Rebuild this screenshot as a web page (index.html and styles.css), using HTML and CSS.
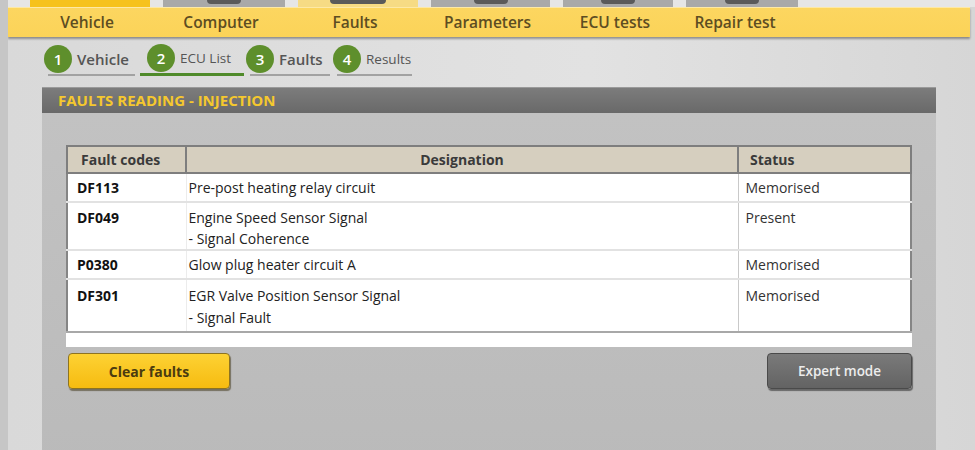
FILE: index.html
```html
<!DOCTYPE html>
<html lang="en">
<head>
    <meta charset="UTF-8">
    <title>Faults reading - Injection</title>
    <link rel="stylesheet" href="styles.css">
</head>
<body>
    <div class="screen">
        <div class="tab-tops">
            <div class="tab-top tab-active w1"></div>
            <div class="tab-top w2"><span class="tab-icon"></span></div>
            <div class="tab-top tab-current w3"><span class="tab-icon wide"></span></div>
            <div class="tab-top w4"><span class="tab-icon"></span></div>
            <div class="tab-top w5"><span class="tab-icon"></span></div>
            <div class="tab-top w6"><span class="tab-icon"></span></div>
        </div>
        <div class="menu">
            <div class="menu-item w1">Vehicle</div>
            <div class="menu-item w2">Computer</div>
            <div class="menu-item w3">Faults</div>
            <div class="menu-item w4">Parameters</div>
            <div class="menu-item w5">ECU tests</div>
            <div class="menu-item w6">Repair test</div>
        </div>

        <div class="steps">
            <div class="step step-1 done"><span class="num">1</span>Vehicle</div>
            <div class="step step-2 active"><span class="num">2</span>ECU List</div>
            <div class="step step-3 done"><span class="num">3</span>Faults</div>
            <div class="step step-4"><span class="num">4</span>Results</div>
        </div>

        <div class="panel">
            <div class="panel-title">FAULTS READING - INJECTION</div>
            <div class="panel-body">
                <div class="table-wrap">
                    <table class="faults">
                        <thead>
                            <tr>
                                <th class="col-code">Fault codes</th>
                                <th class="col-desc">Designation</th>
                                <th class="col-status">Status</th>
                            </tr>
                        </thead>
                        <tbody>
                            <tr>
                                <td class="code">DF113</td>
                                <td class="desc">Pre-post heating relay circuit</td>
                                <td class="status">Memorised</td>
                            </tr>
                            <tr class="tall">
                                <td class="code">DF049</td>
                                <td class="desc">Engine Speed Sensor Signal<br>- Signal Coherence</td>
                                <td class="status">Present</td>
                            </tr>
                            <tr>
                                <td class="code">P0380</td>
                                <td class="desc">Glow plug heater circuit A</td>
                                <td class="status">Memorised</td>
                            </tr>
                            <tr class="tall last">
                                <td class="code">DF301</td>
                                <td class="desc">EGR Valve Position Sensor Signal<br>- Signal Fault</td>
                                <td class="status">Memorised</td>
                            </tr>
                        </tbody>
                    </table>
                </div>
                <div class="actions">
                    <button type="button" class="btn btn-yellow">Clear faults</button>
                    <button type="button" class="btn btn-gray">Expert mode</button>
                </div>
            </div>
        </div>
    </div>
</body>
</html>
```

FILE: styles.css
```css
body {
    margin: 0;
    font-family: "Open Sans", "Noto Sans", sans-serif;
    background-color: #c4c4c4;
}
.screen {
    width: 975px;
    height: 450px;
    overflow: hidden;
    box-sizing: border-box;
    border-left: 8px solid #c6c6c6;
    background: linear-gradient(to right, #d9d9d9, #e2e2e2 60%, #d6d6d6);
}

/* top tabs (only their lower edge is visible) */
.tab-tops {
    display: flex;
    gap: 13px;
    height: 7px;
    padding-left: 22px;
    background: #e6e6e6;
}
.tab-top {
    background: #a9a9a9;
    display: flex;
    justify-content: center;
}
.tab-active { background: #f6c21c; }
.tab-current { background: #f6db84; }
.tab-icon {
    width: 34px;
    height: 4px;
    background: #5a5a5a;
    border-radius: 0 0 4px 4px;
}
.tab-icon.wide { width: 56px; }
.w1 { width: 120px; }
.w2 { width: 122px; }
.w3 { width: 120px; }
.w4 { width: 119px; }
.w5 { width: 110px; }
.w6 { width: 112px; }

.menu {
    display: flex;
    gap: 13px;
    height: 29px;
    margin-right: 5px;
    padding-left: 19px;
    background: linear-gradient(#fcd660, #fbd358);
    box-shadow: 0 2px 2px rgba(0, 0, 0, 0.35);
    border-top: 1px solid #fde9a6;
}
.menu-item {
    text-align: center;
    font-size: 15.5px;
    font-weight: 600;
    line-height: 28px;
    color: #5d4d22;
}
.menu-item.w6 { width: 104px; }

/* wizard steps */
.steps {
    display: flex;
    padding: 9px 0 0 40px;
    height: 33px;
}
.step {
    box-sizing: border-box;
    display: flex;
    align-items: center;
    gap: 5px;
    height: 30px;
    padding: 0 0 3px 0;
    font-size: 13.5px;
    color: #555;
    border-bottom: 2px solid #a2a2a2;
}
.step .num {
    flex: none;
    width: 28px;
    height: 28px;
    margin-left: -4px;
    border-radius: 50%;
    background: #5e8f2c;
    color: #fff;
    font-weight: 600;
    font-size: 15px;
    line-height: 28px;
    text-align: center;
}
.step.done {
    font-size: 15px;
    font-weight: 600;
}
.step-1 { width: 87px; margin-right: 5px; }
.step-2 {
    width: 104px;
    margin-right: 6px;
    padding-left: 7px;
    border-bottom: 3px solid #4f8a2a;
}
.step-2 .num { margin-left: 0; }
.step-3 { width: 80px; margin-right: 7px; }
.step-4 { width: 75px; }

/* main panel */
.panel {
    margin: 8px 39px 0 34px;
    background: #bdbdbd;
    height: 370px;
}
.panel-title {
    height: 25px;
    line-height: 25px;
    padding-left: 16px;
    background: linear-gradient(#7c7c7c, #696969);
    border-top: 1px solid #9a9a9a;
    color: #f5c82e;
    font-size: 15px;
    font-weight: 700;
}
.panel-body {
    padding: 32px 24px 0 24px;
    background: linear-gradient(to bottom, #c2c2c2, #b9b9b9);
    height: 100%;
}
.table-wrap {
    background: #fff;
    padding-bottom: 14px;
}
.faults {
    width: 100%;
    border-collapse: collapse;
    font-size: 14px;
    color: #222;
    border: 2px solid #858585;
    border-top: none;
}
.faults th {
    background: #d6cfbf;
    height: 25px;
    font-weight: 700;
    color: #3a3a3a;
    text-align: left;
    border: 2px solid #7e7e7e;
    padding: 0 0 0 13px;
}
.faults th.col-code { width: 104px; }
.faults th.col-desc { text-align: center; padding: 0; }
.faults th.col-status { width: 160px; padding-left: 11px; }
.faults td {
    vertical-align: top;
    padding: 3px 10px 3px 9px;
    line-height: 21px;
    border-bottom: 2px solid #e2e2e2;
}
.faults tr.tall td {
    padding-top: 4px;
    padding-bottom: 0;
}
.faults tr.last td {
    padding-top: 5px;
    padding-bottom: 2px;
    line-height: 22px;
    border-bottom: 2px solid #a8a8a8;
}
.faults td.code {
    font-weight: 700;
    color: #111;
    border-right: 1px solid #ececec;
}
.faults td.desc { padding-left: 2px; }
.faults td.status {
    padding-left: 7px;
    color: #333;
    border-left: 1px solid #c9c9c9;
}

.actions {
    display: flex;
    justify-content: space-between;
    padding: 6px 0 0 2px;
}
.btn {
    height: 36px;
    border-radius: 4px;
    font-family: "Open Sans", "Noto Sans", sans-serif;
    font-size: 14px;
    font-weight: 700;
    cursor: pointer;
}
.btn-yellow {
    width: 162px;
    background: linear-gradient(#fdd234, #f6bb10);
    border: 1px solid #8d7321;
    box-shadow: 1px 2px 1px rgba(60, 50, 20, 0.55);
    color: #4a3b10;
}
.btn-gray {
    width: 145px;
    background: linear-gradient(#7a7a7a, #636363);
    border: 1px solid #4a4a4a;
    box-shadow: 1px 2px 1px rgba(0, 0, 0, 0.45);
    color: #ececec;
    font-size: 13.5px;
    font-weight: 600;
}
```
